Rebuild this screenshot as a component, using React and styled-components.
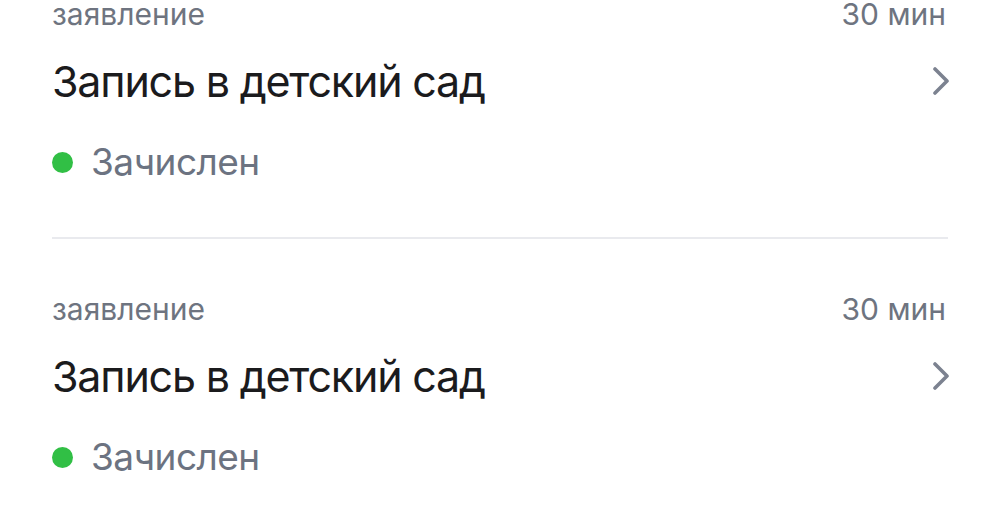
import styled, { createGlobalStyle } from 'styled-components';

const GlobalStyle = createGlobalStyle`
  html, body {
    margin: 0;
    padding: 0;
    background: #fff;
    font-family: Inter, "Noto Sans", "Liberation Sans", sans-serif;
    overflow: hidden;
  }
`;

const applications = [
    {id: 1, kind: 'заявление', time: '30 мин', title: 'Запись в детский сад', status: 'Зачислен'},
    {id: 2, kind: 'заявление', time: '30 мин', title: 'Запись в детский сад', status: 'Зачислен'},
];

const Chevron = () => (
    <svg width="18" height="28" viewBox="0 0 18 28" fill="none">
        <polyline points="3,2 15,14 3,26" stroke="#7c8290" strokeWidth="3.6" strokeLinecap="round" strokeLinejoin="round"/>
    </svg>
);

const ApplicationsList = ({className}) => (
    <ul className={className}>
        {applications.map((item) => (
            <Item key={item.id}>
                <MetaRow>
                    <span>{item.kind}</span>
                    <span>{item.time}</span>
                </MetaRow>
                <TitleRow>
                    <span>{item.title}</span>
                    <Chevron/>
                </TitleRow>
                <Status>
                    <Dot color="#31bf45"/>
                    {item.status}
                </Status>
            </Item>
        ))}
    </ul>
);

const List = styled(ApplicationsList)`
  list-style: none;
  margin: -56px 0 0;
  padding: 0 52px;
`;

const Item = styled.li`
  padding: 52px 0;
  border-bottom: 2px solid #e9eaee;
`;

const MetaRow = styled.div`
  display: flex;
  justify-content: space-between;
  font-size: 30px;
  line-height: 36px;
  color: #6e7480;
  padding-right: 2px;
`;

const TitleRow = styled.div`
  display: flex;
  justify-content: space-between;
  align-items: center;
  margin-top: 23px;
  font-size: 43px;
  line-height: 52px;
  letter-spacing: -1.2px;
  color: #1b1b1d;

  svg {
    margin-right: -2px;
  }
`;

const Status = styled.div`
  display: flex;
  align-items: center;
  gap: 18px;
  margin-top: 32px;
  font-size: 37px;
  line-height: 46px;
  letter-spacing: -0.5px;
  color: #6c7381;
`;

const Dot = styled.span`
  width: 21px;
  height: 21px;
  border-radius: 50%;
  background: ${(p) => p.color};
  flex-shrink: 0;
`;

export default function App() {
    return (
        <>
            <GlobalStyle/>
            <List/>
        </>
    );
}
